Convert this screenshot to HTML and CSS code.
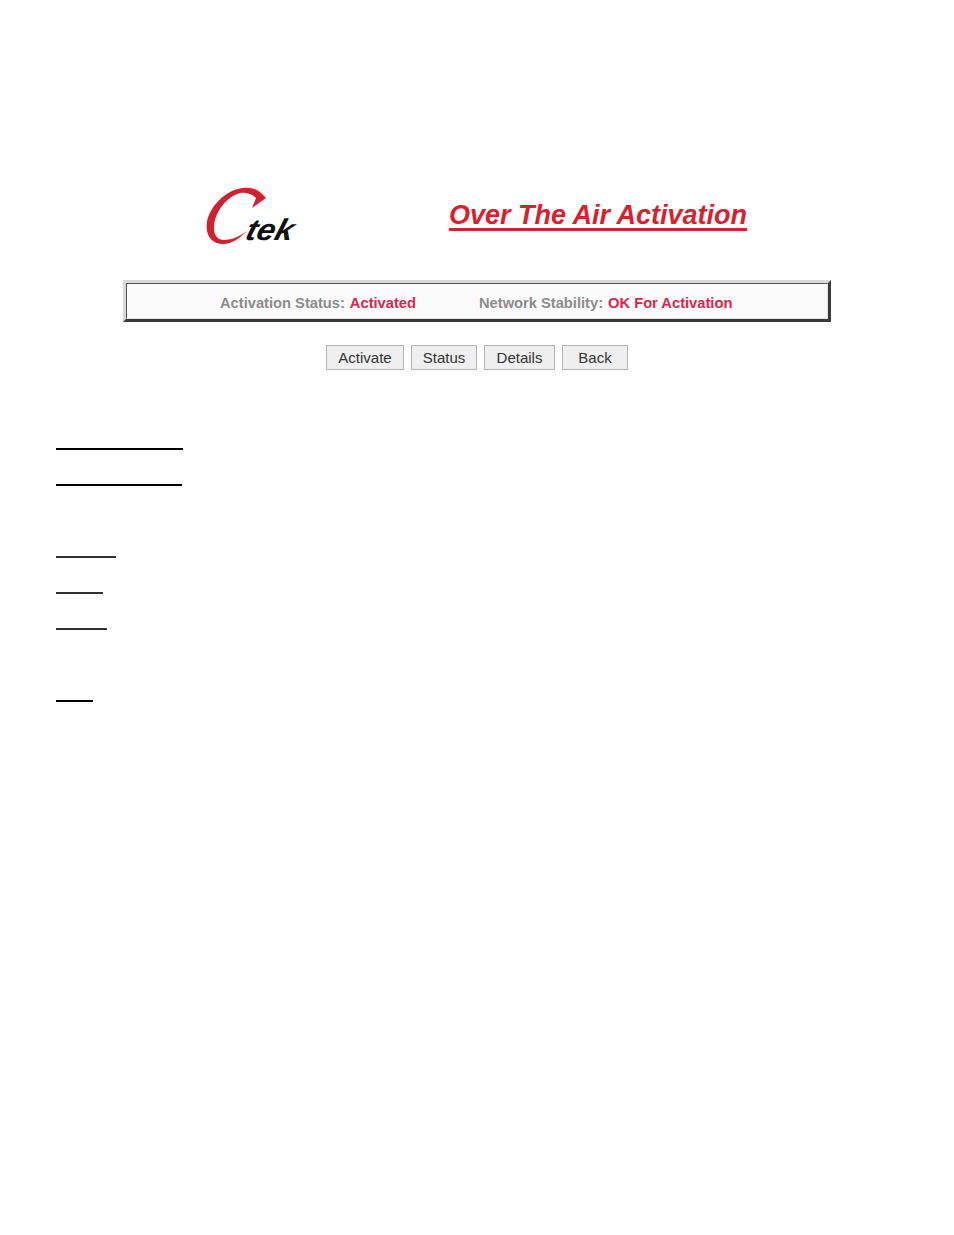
FILE: index.html
```html
<!DOCTYPE html>
<html lang="en">
<head>
    <meta charset="UTF-8">
    <meta name="viewport" content="width=device-width, initial-scale=1.0">
    <title>Over The Air Activation</title>
    <link rel="stylesheet" href="styles.css">
</head>
<body>
    <div class="header">
        <svg class="logo" width="94" height="60" viewBox="0 0 94 60" aria-label="Ctek">
            <path class="logo-c" d="M44 44 C36 52 28 58 19 58 C8 58 2 50 2.7 39 C3.5 22 22 2 42 1.7 C50 1.5 56 5 60 10 L62 12 L48 22 L52 12 C48 8 42 6 36 7 C24 10 11 25 10 40 C9.5 50 14 54 20 54 C28 54 37 50 44 44 Z"/>
            <text class="logo-text" transform="translate(40 54) skewX(-16)" textLength="47" lengthAdjust="spacingAndGlyphs">tek</text>
        </svg>
        <h1 class="title">Over The Air Activation</h1>
    </div>

    <div class="status-box">
        <div class="status-inner">
            <span class="status-item"><span class="label">Activation Status:</span><span class="value">Activated</span></span>
            <span class="status-item"><span class="label">Network Stability:</span><span class="value">OK For Activation</span></span>
        </div>
    </div>

    <div class="buttons">
        <button class="btn btn-activate">Activate</button>
        <button class="btn btn-status">Status</button>
        <button class="btn btn-details">Details</button>
        <button class="btn btn-back">Back</button>
    </div>

    <div class="rules">
        <div class="rule thick w-127"></div>
        <div class="rule thick w-126"></div>
        <div class="rule blank"></div>
        <div class="rule w-60"></div>
        <div class="rule w-47"></div>
        <div class="rule w-51"></div>
        <div class="rule blank"></div>
        <div class="rule thick w-37"></div>
    </div>
</body>
</html>
```

FILE: styles.css
```css
body {
    font-family: 'Liberation Sans', Arial, sans-serif;
    background-color: #fff;
    margin: 0;
    padding: 0;
}
.header {
    display: flex;
    align-items: flex-start;
    height: 94px;
    padding-top: 186px;
    padding-left: 204px;
}
.logo {
    display: block;
    flex: none;
    overflow: visible;
}
.logo-c {
    fill: #d3202f;
}
.logo-text {
    font-family: 'Liberation Sans', sans-serif;
    font-style: italic;
    font-weight: bold;
    font-size: 30px;
    fill: #111;
}
.title {
    margin: 16px 0 0 151px;
    color: #d8202f;
    font-size: 27px;
    line-height: 26px;
    font-weight: bold;
    font-style: italic;
    white-space: nowrap;
    border-bottom: 3px solid #d8202f;
}
.status-box {
    box-sizing: border-box;
    width: 708px;
    height: 42px;
    margin-left: 123px;
    border: 3px solid;
    border-color: #d8d8d8 #3a3a3a #3a3a3a #d8d8d8;
    background-color: #fafafa;
}
.status-inner {
    box-sizing: border-box;
    height: 36px;
    padding: 4px 0 0 93px;
    border: 1px solid;
    border-color: #555 #e2e2e2 #e2e2e2 #555;
    display: flex;
    gap: 63px;
    align-items: center;
}
.status-item {
    font-size: 14.7px;
    font-weight: bold;
    white-space: nowrap;
}
.label {
    color: #8c8c8c;
    margin-right: 5px;
}
.value {
    color: #d8274a;
}
.buttons {
    display: flex;
    gap: 7px;
    margin-top: 23px;
    margin-left: 326px;
}
.btn {
    box-sizing: border-box;
    height: 25px;
    padding: 0;
    font-family: inherit;
    font-size: 15px;
    color: #333;
    background-color: #efefef;
    border: 1px solid #b4b4b4;
}
.btn-activate { width: 78px; }
.btn-status { width: 66px; }
.btn-details { width: 71px; }
.btn-back { width: 66px; }
.rules {
    margin-top: 44px;
    margin-left: 56px;
}
.rule {
    box-sizing: border-box;
    height: 36px;
    border-bottom: 2px solid #333;
}
.rule.thick {
    border-bottom-color: #000;
}
.rule.blank {
    border-bottom: none;
}
.w-127 { width: 127px; }
.w-126 { width: 126px; }
.w-60 { width: 60px; }
.w-47 { width: 47px; }
.w-51 { width: 51px; }
.w-37 { width: 37px; }
```
